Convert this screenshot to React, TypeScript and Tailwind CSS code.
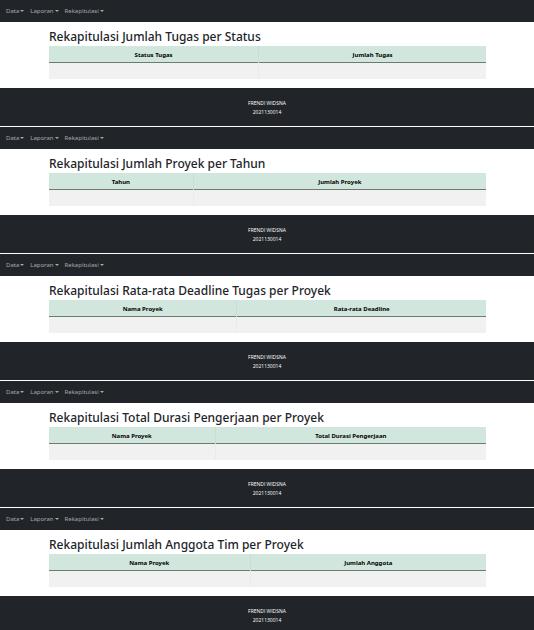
type Report = {
  title: string;
  columns: [string, string];
  firstWidth: string;
};

const reports: Report[] = [
  { title: "Rekapitulasi Jumlah Tugas per Status", columns: ["Status Tugas", "Jumlah Tugas"], firstWidth: "w-[48%]" },
  { title: "Rekapitulasi Jumlah Proyek per Tahun", columns: ["Tahun", "Jumlah Proyek"], firstWidth: "w-[33%]" },
  { title: "Rekapitulasi Rata-rata Deadline Tugas per Proyek", columns: ["Nama Proyek", "Rata-rata Deadline"], firstWidth: "w-[43%]" },
  { title: "Rekapitulasi Total Durasi Pengerjaan per Proyek", columns: ["Nama Proyek", "Total Durasi Pengerjaan"], firstWidth: "w-[38%]" },
  { title: "Rekapitulasi Jumlah Anggota Tim per Proyek", columns: ["Nama Proyek", "Jumlah Anggota"], firstWidth: "w-[46%]" },
];

const menus = ["Data", "Laporan", "Rekapitulasi"];

function NavBar() {
  return (
    <nav className="flex h-[22px] items-center gap-[6px] bg-[#212529] px-[6px]">
      {menus.map((menu) => (
        <button key={menu} type="button" className="flex items-center gap-px text-[6px] leading-[8px] text-[#a6a8a9]">
          {menu}
          <span className="border-x-2 border-t-2 border-x-transparent border-t-[#a6a8a9]" />
        </button>
      ))}
    </nav>
  );
}

function ReportTable({ columns, firstWidth }: Report) {
  return (
    <table className="w-full table-fixed border-collapse text-[6px] leading-[8px] text-black">
      <thead>
        <tr className="h-4 border-b border-[#6c7a74] bg-[#d1e7dd]">
          <th className={`${firstWidth} border-r border-r-[#c8ddd4] px-0 pt-[2px] pb-0 text-center font-bold`}>{columns[0]}</th>
          <th className="px-0 pt-[2px] pb-0 text-center font-bold">{columns[1]}</th>
        </tr>
      </thead>
      <tbody>
        <tr className="h-[17px] bg-[#f1f1f1]">
          <td className="border-r border-r-[#ebebeb] p-0" />
          <td className="p-0" />
        </tr>
      </tbody>
    </table>
  );
}

export default function App() {
  return (
    <div className="bg-white font-['Noto_Sans','Open_Sans',sans-serif]">
      {reports.map((report) => (
        <section key={report.title} className="group border-b border-white last:border-b-0">
          <NavBar />
          <main className="mr-12 ml-[49px] pb-[9px]">
            <h2 className="pt-[7px] pb-px text-[12px] leading-[16px] font-medium whitespace-nowrap text-[#212529]">
              {report.title}
            </h2>
            <ReportTable {...report} />
          </main>
          <footer className="bg-[#212529] pt-[11px] pb-[9px] text-center font-['Open_Sans','Noto_Sans',sans-serif] text-[5px] leading-[9px] text-white group-last:pb-[5px]">
            <p>FRENDI WIDSNA</p>
            <p>2021130014</p>
          </footer>
        </section>
      ))}
    </div>
  );
}
